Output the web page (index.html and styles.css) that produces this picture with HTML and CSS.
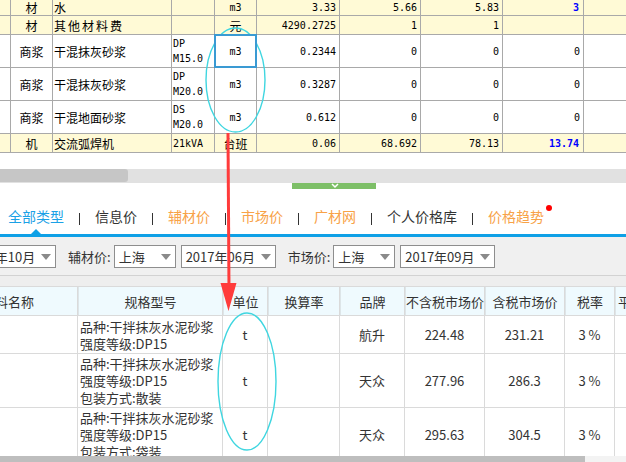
FILE: index.html
```html
<!DOCTYPE html>
<html lang="zh">
<head>
<meta charset="utf-8">
<title>材料价格</title>
<link rel="stylesheet" href="styles.css">
</head>
<body>
<div class="page">
  <div class="top">
    <div class="y"></div><div class="y ctr">材</div><div class="y name">水</div><div class="y"></div><div class="y ctr mono">m3</div><div class="y num">3.33</div><div class="y num">5.66</div><div class="y num">5.83</div><div class="y num blue">3</div><div class="y"></div>
    <div class="y"></div><div class="y ctr">材</div><div class="y name wide">其他材料费</div><div class="y"></div><div class="y ctr">元</div><div class="y num">4290.2725</div><div class="y num">1</div><div class="y num">1</div><div class="y"></div><div class="y"></div>
    <div></div><div class="ctr">商浆</div><div class="name">干混抹灰砂浆</div><div class="spec"><span>DP<br>M15.0</span></div><div class="ctr mono sel">m3</div><div class="num">0.2344</div><div class="num">0</div><div class="num">0</div><div class="num">0</div><div></div>
    <div></div><div class="ctr">商浆</div><div class="name">干混抹灰砂浆</div><div class="spec"><span>DP<br>M20.0</span></div><div class="ctr mono">m3</div><div class="num">0.3287</div><div class="num">0</div><div class="num">0</div><div class="num">0</div><div></div>
    <div></div><div class="ctr">商浆</div><div class="name">干混地面砂浆</div><div class="spec"><span>DS<br>M20.0</span></div><div class="ctr mono">m3</div><div class="num">0.612</div><div class="num">0</div><div class="num">0</div><div class="num">0</div><div></div>
    <div class="y"></div><div class="y ctr">机</div><div class="y name">交流弧焊机</div><div class="y spec">21kVA</div><div class="y ctr">台班</div><div class="y num">0.06</div><div class="y num">68.692</div><div class="y num">78.13</div><div class="y num blue">13.74</div><div class="y"></div>
  </div>

  <div class="hscroll"><div class="hthumb"></div></div>

  <div class="splitter">
    <div class="grip">
      <svg width="10" height="6" viewBox="0 0 10 6"><polyline points="2,1 5,4 8,1" fill="none" stroke="#ffffff" stroke-width="1.5"/></svg>
    </div>
  </div>

  <div class="tabs">
    <span class="tab active">全部类型</span><i class="bar"></i>
    <span class="tab dark">信息价</span><i class="bar"></i>
    <span class="tab orange">辅材价</span><i class="bar"></i>
    <span class="tab orange">市场价</span><i class="bar"></i>
    <span class="tab orange">广材网</span><i class="bar"></i>
    <span class="tab dark">个人价格库</span><i class="bar"></i>
    <span class="tab orange dot">价格趋势</span>
  </div>
  <div class="tabline"></div>

  <div class="filters">
    <div class="select w95 first"><span>2017年10月</span><i class="caret"></i></div>
    <span class="label">辅材价:</span>
    <div class="select w62"><span>上海</span><i class="caret"></i></div>
    <div class="select w95"><span>2017年06月</span><i class="caret"></i></div>
    <span class="label">市场价:</span>
    <div class="select w62"><span>上海</span><i class="caret"></i></div>
    <div class="select w95"><span>2017年09月</span><i class="caret"></i></div>
  </div>
  <div class="fsep"></div>

  <div class="wrap">
    <div class="bot">
      <div class="h first-h">材料名称</div><div class="h">规格型号</div><div class="h">单位</div><div class="h">换算率</div><div class="h">品牌</div><div class="h">不含税市场价</div><div class="h">含税市场价</div><div class="h">税率</div><div class="h last-h">平均价</div>

      <div></div><div class="sp"><span>品种:干拌抹灰水泥砂浆<br>强度等级:DP15</span></div><div>t</div><div></div><div>航升</div><div>224.48</div><div>231.21</div><div>3 %</div><div></div>

      <div></div><div class="sp"><span>品种:干拌抹灰水泥砂浆<br>强度等级:DP15<br>包装方式:散装</span></div><div>t</div><div></div><div>天众</div><div>277.96</div><div>286.3</div><div>3 %</div><div></div>

      <div></div><div class="sp"><span>品种:干拌抹灰水泥砂浆<br>强度等级:DP15<br>包装方式:袋装</span></div><div>t</div><div></div><div>天众</div><div>295.63</div><div>304.5</div><div>3 %</div><div></div>
    </div>
  </div>

  <div class="bscroll"><div class="bthumb"></div></div>

  <svg class="annot" width="626" height="462" viewBox="0 0 626 462">
    <ellipse cx="235.5" cy="80" rx="29.5" ry="52" fill="none" stroke="#3fd6e0" stroke-width="1.4"/>
    <ellipse cx="247" cy="381.5" rx="29" ry="68.5" fill="none" stroke="#3fd6e0" stroke-width="1.4"/>
    <line x1="228" y1="133" x2="229" y2="290" stroke="#ff3b3b" stroke-width="3"/>
    <polygon points="220.5,283 236.5,283 228.5,311" fill="#ff3b3b"/>
  </svg>
</div>
</body>
</html>
```

FILE: styles.css
```css
html, body {
  margin: 0;
  padding: 0;
  background: #ffffff;
}

.page {
  position: relative;
  width: 626px;
  height: 462px;
  overflow: hidden;
  display: flex;
  flex-direction: column;
  font-family: "Noto Sans CJK SC", "Noto Sans", sans-serif;
}

/* ---------- upper grid ---------- */
.top {
  display: grid;
  grid-template-columns: 10px 41px 118px 42px 41px 82px 80px 81px 80px 1fr;
  grid-template-rows: 15px 18px 32px 32px 32px 18px;
  gap: 1px;
  background: #a9a9a9;
  padding-bottom: 1px;
  font-size: 12px;
  line-height: 15px;
  color: #000000;
  flex: none;
}

.top > div {
  background: #ffffff;
  display: flex;
  align-items: center;
  white-space: nowrap;
  overflow: hidden;
}

.top > .y {
  background: #fffad6;
}

.top > .ctr {
  justify-content: center;
}

.top > .name {
  padding-left: 1px;
}

.top > .wide {
  letter-spacing: 2px;
}

.top > .spec {
  padding-left: 1px;
  font-family: "DejaVu Sans Mono", monospace;
  font-size: 10px;
}

.top > .num {
  justify-content: flex-end;
  padding-right: 3px;
  font-family: "DejaVu Sans Mono", monospace;
  font-size: 10px;
}

.top > .mono {
  font-family: "DejaVu Sans Mono", monospace;
  font-size: 10px;
}

.top > .blue {
  color: #0000ff;
  font-weight: bold;
  padding-right: 4px;
}

.top > .sel {
  outline: 2px solid #3a9ad3;
  outline-offset: -1px;
  position: relative;
  z-index: 1;
  overflow: visible;
}

/* ---------- horizontal scroll of upper grid ---------- */
.hscroll {
  margin-top: 16px;
  height: 14px;
  background: #e1e1e1;
  flex: none;
}

.hthumb {
  width: 128px;
  height: 13px;
  background: #c6c6c6;
  border-radius: 0 3px 3px 0;
}

/* ---------- splitter ---------- */
.splitter {
  height: 6px;
  flex: none;
  display: flex;
}

.grip {
  margin-left: 292px;
  width: 84px;
  height: 6px;
  background: #7dbf67;
  display: flex;
  justify-content: center;
  align-items: flex-start;
}

.grip svg {
  display: block;
  margin-left: 1px;
}

/* ---------- tabs ---------- */
.tabs {
  height: 45px;
  box-sizing: border-box;
  padding-top: 9px;
  padding-left: 8px;
  display: flex;
  align-items: stretch;
  gap: 15px;
  flex: none;
  font-size: 14px;
}

.tab {
  display: flex;
  align-items: center;
  position: relative;
  white-space: nowrap;
}

.tab.active {
  color: #1ba1e6;
}

.tab.active::after {
  content: "";
  position: absolute;
  left: 50%;
  bottom: 0;
  margin-left: -5px;
  border-left: 5px solid transparent;
  border-right: 5px solid transparent;
  border-bottom: 5px solid #0ea0e6;
}

.tab.dark {
  color: #333333;
}

.tab.orange {
  color: #f8a247;
}

.tab.dot::after {
  content: "";
  position: absolute;
  right: -8px;
  top: 7px;
  width: 6px;
  height: 6px;
  border-radius: 50%;
  background: #ff0000;
}

.bar {
  width: 1px;
  height: 12px;
  background: #333333;
  align-self: center;
  margin-top: 5px;
}

.tabline {
  height: 3px;
  background: #0ea0e6;
  flex: none;
}

/* ---------- filters ---------- */
.filters {
  height: 38px;
  box-sizing: border-box;
  background: #f0f0f0;
  padding-top: 8px;
  display: flex;
  align-items: flex-start;
  flex: none;
  font-size: 13px;
  color: #333333;
}

.select {
  height: 23px;
  box-sizing: border-box;
  border: 1px solid #8e8e8e;
  background: #ffffff;
  display: flex;
  align-items: center;
  padding-left: 4px;
  white-space: nowrap;
  flex: none;
}

.select + .select {
  margin-left: 5px;
}

.w95 {
  width: 95px;
}

.w62 {
  width: 62px;
}

.select.first {
  margin-left: -39px;
}

.caret {
  margin-left: auto;
  margin-right: 4px;
  width: 0;
  height: 0;
  border-left: 5px solid transparent;
  border-right: 5px solid transparent;
  border-top: 6px solid #8a8a8a;
}

.label {
  height: 23px;
  display: flex;
  align-items: center;
  margin-left: 12px;
  margin-right: 3px;
  white-space: nowrap;
}

.fsep {
  height: 1px;
  background: #d2d2d2;
  flex: none;
}

/* ---------- lower grid ---------- */
.wrap {
  flex: 1;
  overflow: hidden;
  background: #eeeeee;
  padding-top: 10px;
}

.bot {
  margin-left: -61px;
  width: calc(100% + 61px);
  display: grid;
  grid-template-columns: 138px 144px 44px 71px 64px 79px 79px 49px 1fr;
  grid-template-rows: 28px 37px 53px 53px;
  gap: 1px;
  background: #dadada;
  padding-top: 1px;
  font-size: 13px;
  color: #333333;
}

.bot > div {
  background: #ffffff;
  display: flex;
  align-items: center;
  justify-content: center;
  white-space: nowrap;
  overflow: hidden;
}

.bot > .h {
  background: #effafe;
  border-left: 1px solid #dde5e8;
}

.bot > .first-h {
  border-left: none;
}

.bot > .last-h {
  justify-content: flex-start;
  padding-left: 2px;
}

.bot > .sp {
  justify-content: flex-start;
  padding-left: 2px;
  line-height: 17px;
}

.bscroll {
  height: 6px;
  flex: none;
  background: #f3f3f3;
}

.bthumb {
  width: 585px;
  height: 6px;
  background: #bebebe;
}

/* ---------- annotation overlay ---------- */
.annot {
  position: absolute;
  left: 0;
  top: 0;
  pointer-events: none;
}
```
